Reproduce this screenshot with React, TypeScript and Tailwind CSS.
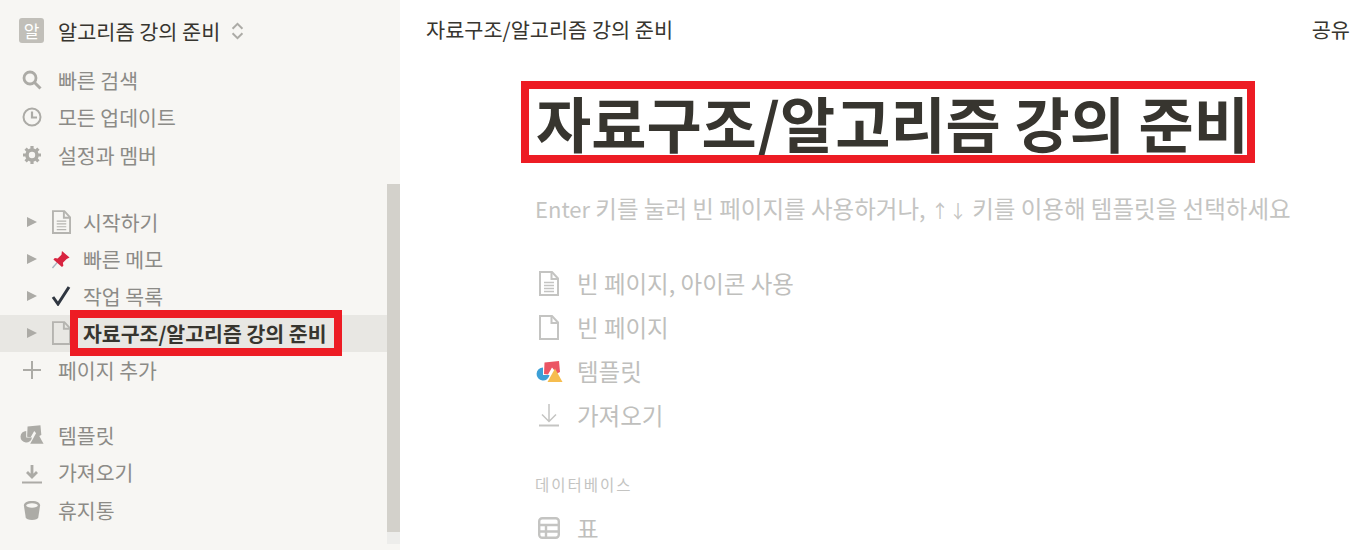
const font = "[font-family:'Noto_Sans_CJK_KR','Noto_Sans',sans-serif]";

function PageIcon({ lines, className }: { lines?: boolean; className?: string }) {
  return (
    <svg viewBox="0 0 20 25" className={className} fill="none" stroke="currentColor" strokeWidth="2">
      <path d="M1 1h12l6 6.500V24H1z" />
      <path d="M12.500 1v7h6.500" />
      {lines && <path d="M5 11.500h10M5 14.500h10M5 17.500h10M5 20.500h10" strokeWidth="1.300" />}
    </svg>
  );
}

function SearchIcon() {
  return (
    <svg viewBox="0 0 20 20" className="h-[20px] w-[20px]" fill="none" stroke="#acaba6">
      <circle cx="8" cy="8" r="6" strokeWidth="2.800" />
      <path d="M12.500 12.500l6 6" strokeWidth="3" />
    </svg>
  );
}

function ClockIcon() {
  return (
    <svg viewBox="0 0 20 20" className="h-[20px] w-[20px]" fill="none" stroke="#acaba6" strokeWidth="2">
      <circle cx="10" cy="10" r="8.500" />
      <path d="M10 4.500v6h5" strokeWidth="2.200" />
    </svg>
  );
}

function GearIcon() {
  return (
    <svg viewBox="0 0 20 20" className="h-[20px] w-[20px]" fill="none" stroke="#acaba6">
      <circle cx="10" cy="10" r="5" strokeWidth="3.600" />
      <path
        d="M10 1v3M10 16v3M1 10h3M16 10h3M3.600 3.600l2.200 2.200M14.200 14.200l2.200 2.200M3.600 16.400l2.200-2.200M14.200 5.800l2.200-2.200"
        strokeWidth="3.200"
      />
    </svg>
  );
}

function TemplateIcon({ color }: { color?: boolean }) {
  return (
    <svg viewBox="0 0 27 21" className="h-[21px] w-[27px]">
      <path d="M7 6.500a6.500 6.500 0 1 0 6.500 7.500H7z" fill={color ? "#3c9fd6" : "#acaba6"} />
      <path d="M8.500 1.500L23 0l1 11-3 1.500-5-6-4 7-4-.5z" fill={color ? "#eb5564" : "#acaba6"} />
      <path d="M19 7.500l7.500 13.500h-15z" fill={color ? "#f6bd4f" : "#acaba6"} />
    </svg>
  );
}

function ImportIcon({ thin }: { thin?: boolean }) {
  return (
    <svg viewBox="0 0 24 24" className="h-[24px] w-[24px]" fill="none" stroke={thin ? "#c4c4c2" : "#acaba6"}>
      <path d={thin ? "M12 1v17M5 11.500l7 7 7-7" : "M12 5v12M7 12l5 5 5-5"} strokeWidth={thin ? 1.500 : 2.800} />
      <path d="M2 22.500h20" strokeWidth="2" />
    </svg>
  );
}

function TrashIcon() {
  return (
    <svg viewBox="0 0 20 22" className="h-[20px] w-[18px]">
      <path d="M1 6c0-3 3-5 9-5s9 2 9 5l-2 13c-.5 2-3 3-7 3s-6.500-1-7-3z" fill="#acaba6" />
      <ellipse cx="10" cy="6" rx="6.500" ry="2.500" fill="#f7f6f3" />
    </svg>
  );
}

function TableIcon() {
  return (
    <svg viewBox="0 0 22 22" className="h-[22px] w-[22px]" fill="none" stroke="#c4c4c2" strokeWidth="2.400">
      <rect x="1.200" y="1.200" width="19.600" height="19.600" rx="3" />
      <path d="M1 8h20M1 14.500h20M8 8v13" />
    </svg>
  );
}

function PinIcon() {
  return (
    <svg viewBox="0 0 20 20" className="h-[19px] w-[20px]">
      <path d="M1 19l6-7" stroke="#a8b4c0" strokeWidth="1.500" />
      <path d="M11 1l8 7-3 1.500-4 4 .5 3-1.500 1.500-9-8 1.500-1.500 3 .5 4-4z" fill="#d8243f" />
    </svg>
  );
}

function Triangle() {
  return <span className="h-0 w-0 border-y-[5.500px] border-l-[10px] border-y-transparent border-l-[#acaba6]" />;
}

function NavRow({ icon, label }: { icon: React.ReactNode; label: string }) {
  return (
    <div className="flex h-[37.500px] items-center pl-[20px]">
      <span className="flex w-[24px] justify-center">{icon}</span>
      <span className="ml-[14px] text-[20.500px] leading-[30px] text-[#8c8b87]">{label}</span>
    </div>
  );
}

function PageRow({ icon, label, active }: { icon: React.ReactNode; label: string; active?: boolean }) {
  return (
    <div className={`flex h-[37px] items-center pl-[27px] ${active ? "bg-[#e8e7e3]" : ""}`}>
      <Triangle />
      <span className="ml-[14px] flex w-[20px] justify-center">{icon}</span>
      <span
        className={
          active
            ? "ml-[12px] text-[20.500px] leading-[30px] font-bold whitespace-nowrap text-[#37352f]"
            : "ml-[12px] text-[20.500px] leading-[30px] text-[#8c8b87]"
        }
      >
        {label}
      </span>
    </div>
  );
}

function OptionRow({ icon, label }: { icon: React.ReactNode; label: string }) {
  return (
    <div className="flex h-[44px] items-center">
      <span className="flex w-[28px] justify-center">{icon}</span>
      <span className="ml-[14px] text-[23.500px] leading-[32px] text-[#bfbfbd]">{label}</span>
    </div>
  );
}

export default function App() {
  return (
    <div className={`${font} flex h-[550px] w-[1359px] overflow-hidden bg-white`}>
      <aside className="relative flex w-[400px] shrink-0 bg-[#f7f6f3]">
        <div className="min-w-0 flex-1 pt-[12px]">
          <div className="flex h-[37px] items-center pl-[19px]">
            <span className="flex h-[25px] w-[25px] items-center justify-center rounded-[3px] bg-[#c1bfb9] text-[17px] text-white">
              알
            </span>
            <span className="ml-[14px] text-[20.800px] leading-[30px] text-[#37352f]">알고리즘 강의 준비</span>
            <svg viewBox="0 0 14 20" className="ml-[11px] h-[18px] w-[13px]" fill="none" stroke="#acaba6" strokeWidth="2.200">
              <path d="M1.500 7.500L7 2l5.500 5.500M1.500 12.500L7 18l5.500-5.500" />
            </svg>
          </div>
          <div className="mt-[12px]">
            <NavRow icon={<SearchIcon />} label="빠른 검색" />
            <NavRow icon={<ClockIcon />} label="모든 업데이트" />
            <NavRow icon={<GearIcon />} label="설정과 멤버" />
          </div>
          <div className="mt-[30px]">
            <PageRow icon={<PageIcon lines className="h-[24px] w-[19px] text-[#b5b4b0]" />} label="시작하기" />
            <PageRow icon={<PinIcon />} label="빠른 메모" />
            <PageRow
              icon={
                <svg viewBox="0 0 20 20" className="h-[20px] w-[20px]" fill="none" stroke="#2f3640" strokeWidth="3">
                  <path d="M2 11l5 7L18 1" />
                </svg>
              }
              label="작업 목록"
            />
            <PageRow icon={<PageIcon className="h-[24px] w-[19px] text-[#b5b4b0]" />} label="자료구조/알고리즘 강의 준비" active />
            <NavRow
              icon={
                <svg viewBox="0 0 20 20" className="h-[20px] w-[20px]" stroke="#acaba6" strokeWidth="2">
                  <path d="M10 1v18M1 10h18" />
                </svg>
              }
              label="페이지 추가"
            />
          </div>
          <div className="mt-[27px]">
            <NavRow icon={<TemplateIcon />} label="템플릿" />
            <NavRow icon={<ImportIcon />} label="가져오기" />
            <NavRow icon={<TrashIcon />} label="휴지통" />
          </div>
        </div>
        <div className="mt-[184px] mb-[6px] flex w-[13px] shrink-0 flex-col">
          <div className="h-[348px] bg-[#d3d1cb]" />
          <div className="h-[12px] bg-[#ededeb]" />
        </div>
        {/* annotation box over the active row */}
        <div className="pointer-events-none absolute top-[310px] left-[70px] h-[46px] w-[272px] border-[8px] border-[#ed1c24]" />
      </aside>

      <main className="relative min-w-0 flex-1">
        <header className="flex h-[60px] items-center justify-between pr-[9px] pl-[26px] text-[20.800px] text-[#37352f]">
          <span>자료구조/알고리즘 강의 준비</span>
          <span>공유</span>
        </header>
        <div className="pl-[136px]">
          <h1 className="mt-[27px] flex h-[70px] items-center text-[60px] leading-none font-bold whitespace-nowrap text-[#37352f]">
            자료구조/알고리즘 강의 준비
          </h1>
          <p className="mt-[36px] -ml-px text-[23.500px] leading-[30px] whitespace-nowrap text-[#c4c4c2]">
            <span className="text-[22px]">Enter</span> 키를 눌러 빈 페이지를 사용하거나,{" "}
            <span className="text-[18px]">↑↓</span> 키를 이용해 템플릿을 선택하세요
          </p>
          <div className="mt-[36px] -ml-px">
            <OptionRow icon={<PageIcon lines className="h-[25px] w-[20px] text-[#c4c4c2]" />} label="빈 페이지, 아이콘 사용" />
            <OptionRow icon={<PageIcon className="h-[25px] w-[20px] text-[#c4c4c2]" />} label="빈 페이지" />
            <OptionRow icon={<TemplateIcon color />} label="템플릿" />
            <OptionRow icon={<ImportIcon thin />} label="가져오기" />
          </div>
          <div className="mt-[36px] -ml-px text-[15.500px] tracking-[2px] text-[#c4c4c2]">데이터베이스</div>
          <div className="mt-[10px] -ml-px">
            <OptionRow icon={<TableIcon />} label="표" />
          </div>
        </div>
        {/* annotation box around the page title */}
        <div className="pointer-events-none absolute top-[81px] left-[121px] h-[82px] w-[734px] border-[8px] border-[#ed1c24]" />
      </main>
    </div>
  );
}
